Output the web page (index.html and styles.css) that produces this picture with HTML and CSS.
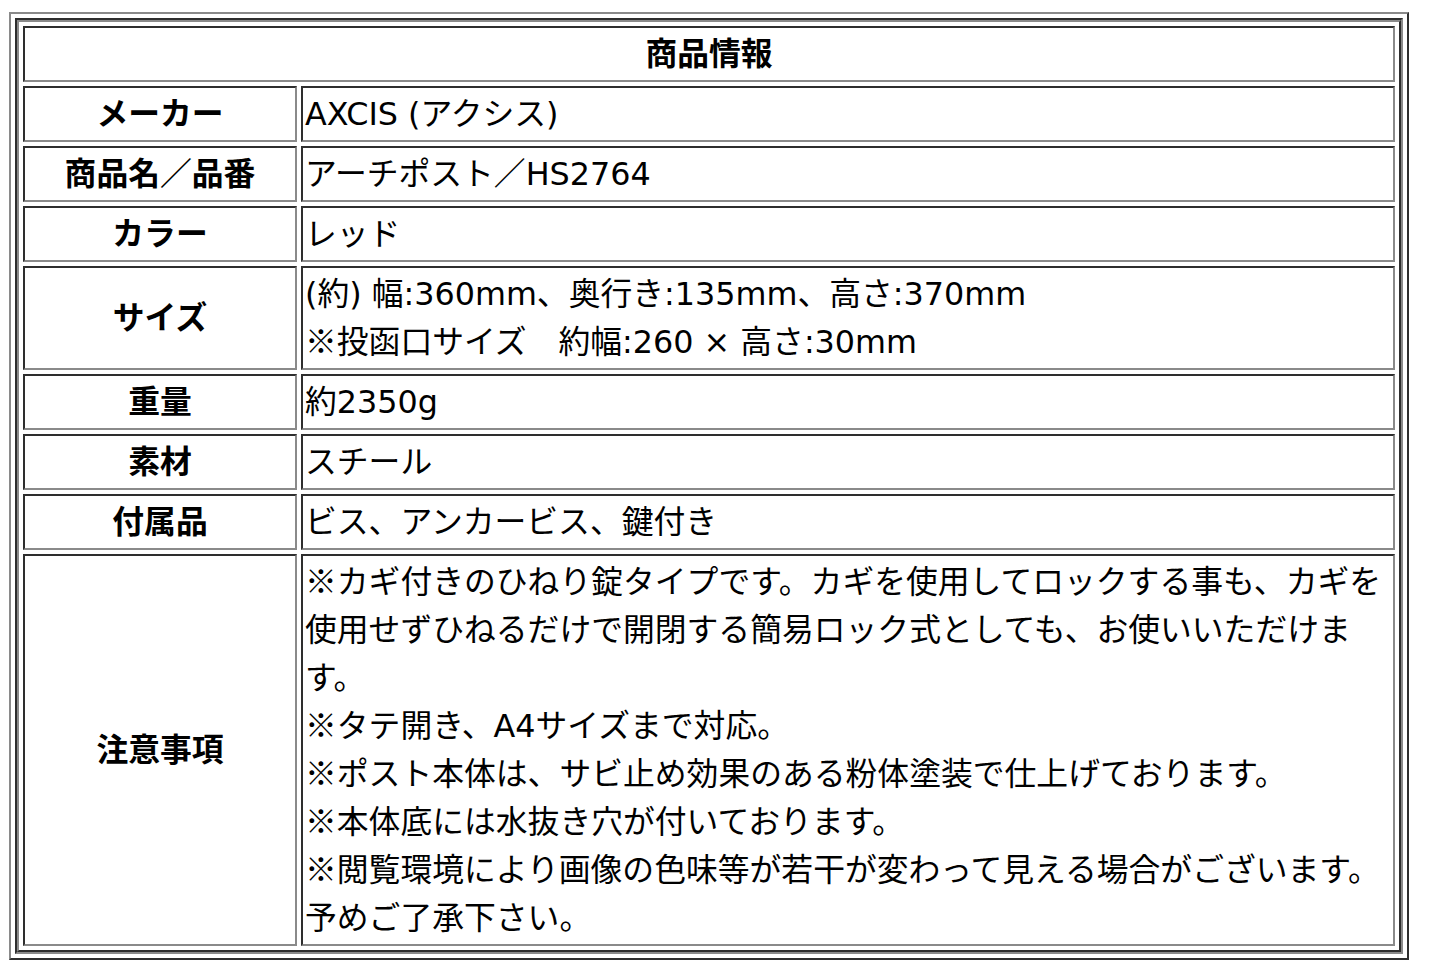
FILE: index.html
```html
<!DOCTYPE html>
<html lang="ja">
<head>
<meta charset="utf-8">
<title>商品情報</title>
<link rel="stylesheet" href="styles.css">
</head>
<body>
<table class="frame">
  <tr>
    <td class="frame-cell">
      <table class="spec">
        <tr>
          <th class="head" colspan="2">商品情報</th>
        </tr>
        <tr>
          <th class="label">メーカー</th>
          <td class="value">AXCIS (アクシス)</td>
        </tr>
        <tr>
          <th class="label">商品名／品番</th>
          <td class="value">アーチポスト／HS2764</td>
        </tr>
        <tr>
          <th class="label">カラー</th>
          <td class="value">レッド</td>
        </tr>
        <tr>
          <th class="label">サイズ</th>
          <td class="value">(約) 幅:360mm、奥行き:135mm、高さ:370mm<br><span class="jp">※</span>投函口サイズ　約幅:260 × 高さ:30mm</td>
        </tr>
        <tr>
          <th class="label">重量</th>
          <td class="value">約2350g</td>
        </tr>
        <tr>
          <th class="label">素材</th>
          <td class="value">スチール</td>
        </tr>
        <tr>
          <th class="label">付属品</th>
          <td class="value">ビス、アンカービス、鍵付き</td>
        </tr>
        <tr>
          <th class="label">注意事項</th>
          <td class="value"><span class="jp">※</span>カギ付きのひねり錠タイプです。カギを使用してロックする事も、カギを使用せずひねるだけで開閉する簡易ロック式としても、お使いいただけます。<br><span class="jp">※</span>タテ開き、A4サイズまで対応。<br><span class="jp">※</span>ポスト本体は、サビ止め効果のある粉体塗装で仕上げております。<br><span class="jp">※</span>本体底には水抜き穴が付いております。<br><span class="jp">※</span>閲覧環境により画像の色味等が若干が変わって見える場合がございます。<br>予めご了承下さい。</td>
        </tr>
      </table>
    </td>
  </tr>
</table>
</body>
</html>
```

FILE: styles.css
```css
html, body {
  background: #ffffff;
}

body {
  margin: 12px 0 0 9px;
  font-family: "DejaVu Sans", "Noto Sans CJK JP", sans-serif;
  font-size: 31.8px;
  line-height: 48px;
  color: #000000;
}

.jp {
  font-family: "Noto Sans CJK JP", sans-serif;
  line-height: 1;
}

.frame {
  border-collapse: separate;
  border-spacing: 4px;
  border: 2px solid;
  border-color: #8a8a8a #2e2e2e #2e2e2e #8a8a8a;
  width: 1400px;
  box-sizing: border-box;
}

.frame-cell {
  padding: 0;
  border: 2px solid;
  border-color: #2e2e2e #8a8a8a #8a8a8a #2e2e2e;
}

.spec {
  border-collapse: separate;
  border-spacing: 4px;
  border: 2px solid;
  border-color: #8a8a8a #2e2e2e #2e2e2e #8a8a8a;
  width: 1384px;
  box-sizing: border-box;
}

.spec th,
.spec td {
  border: 2px solid;
  border-color: #2e2e2e #8a8a8a #8a8a8a #2e2e2e;
  padding: 2px;
  vertical-align: middle;
}

.head {
  text-align: center;
  font-weight: bold;
}

.label {
  box-sizing: border-box;
  width: 274px;
  text-align: center;
  font-weight: bold;
}

.value {
  text-align: left;
  font-weight: normal;
}
```
